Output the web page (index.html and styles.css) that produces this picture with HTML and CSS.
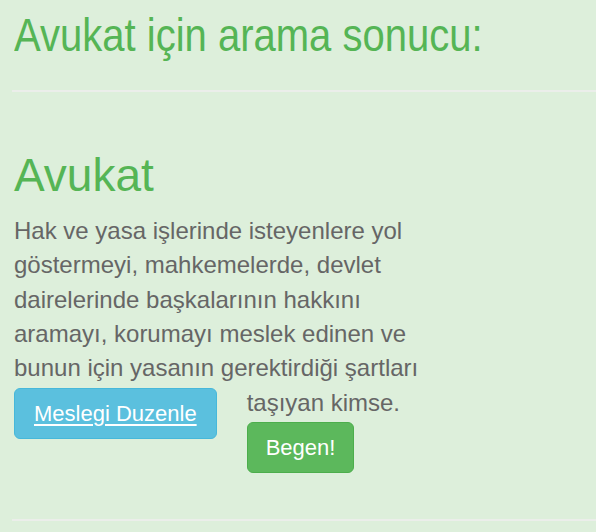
FILE: index.html
```html
<!DOCTYPE html>
<html lang="tr">
<head>
<meta charset="utf-8">
<title>Avukat için arama sonucu</title>
<link rel="stylesheet" href="styles.css">
</head>
<body>
<div class="page">
  <h1 class="title">Avukat için arama sonucu:</h1>
  <hr class="rule">
  <section class="result">
    <h2 class="result-name">Avukat</h2>
    <p class="result-desc">Hak ve yasa işlerinde isteyenlere yol göstermeyi, mahkemelerde, devlet dairelerinde başkalarının hakkını aramayı, korumayı meslek edinen ve bunun için yasanın gerektirdiği şartları <a class="btn btn-info btn-float" href="#">Meslegi Duzenle</a>taşıyan kimse.</p>
    <div class="actions"><a class="btn btn-success" href="#">Begen!</a></div>
  </section>
  <hr class="rule rule-bottom">
</div>
</body>
</html>
```
FILE: styles.css
```css
html, body {
  margin: 0;
  padding: 0;
  background: #ddefdb;
}
body {
  font-family: "Liberation Sans", Arial, sans-serif;
  color: #666;
}
.page {
  padding: 10px 0 0 14px;
  overflow: hidden;
}
.title {
  margin: 0;
  font-size: 46px;
  line-height: 1.1;
  font-weight: normal;
  color: #55b555;
  transform: scaleX(0.87);
  transform-origin: left center;
  white-space: nowrap;
}
.rule {
  height: 2px;
  border: 0;
  background: #ebeeea;
  margin: 29px 0 0 -2px;
}
.result {
  padding-top: 58px;
}
.result-name {
  margin: 0;
  font-size: 46px;
  line-height: 1.1;
  font-weight: normal;
  color: #55b555;
}
.result-desc {
  margin: 14px 0 0;
  max-width: 430px;
  font-size: 24px;
  line-height: 34.3px;
}
.btn {
  display: inline-block;
  padding: 10px 18px;
  font-size: 22px;
  line-height: 29px;
  border: 1px solid transparent;
  border-radius: 6px;
  color: #fff;
  text-decoration: none;
}
.btn-info {
  background: #5bc0de;
  border-color: #46b8da;
  text-decoration: underline;
  text-underline-offset: 3px;
}
.btn-float {
  float: left;
  margin: 2px 30px 0 0;
  padding: 10px 19px;
}
.btn-success {
  background: #5cb85c;
  border-color: #4cae4c;
}
.actions {
  margin-top: 2px;
  line-height: 1;
}
.rule-bottom {
  margin-top: 46px;
}
```
